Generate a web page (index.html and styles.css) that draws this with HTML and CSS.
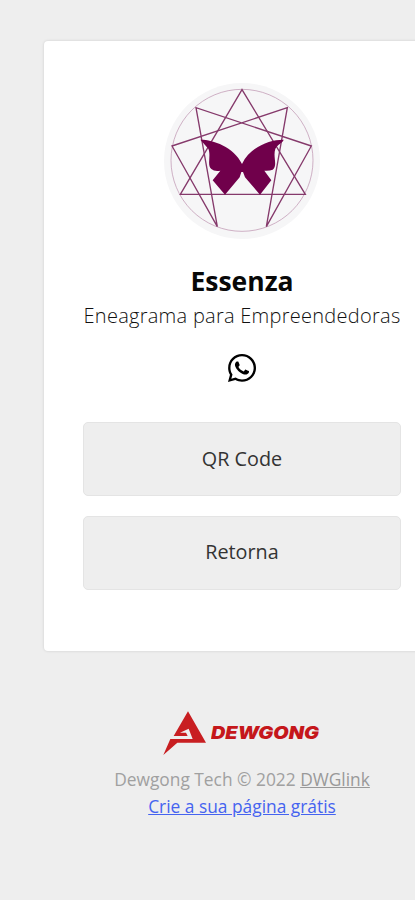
FILE: index.html
```html
<!DOCTYPE html>
<html lang="pt-BR">
<head>
<meta charset="utf-8">
<meta name="viewport" content="width=device-width, initial-scale=1">
<title>Essenza</title>
<link rel="stylesheet" href="styles.css">
</head>
<body>
<div class="page">
  <main class="card">
    <svg class="avatar" viewBox="0 0 474 474" aria-label="Essenza">
      <circle cx="237" cy="237" r="234" fill="#f6f6f7"/>
      <g fill="none" stroke="#85396b">
        <circle cx="237" cy="235" r="213" stroke-width="2" stroke="#b98daa"/>
        <g stroke-width="4">
          <path d="M237 23L52 337H427Z"/>
          <path d="M373 77L27 192L163 434L99 77L445 192L310 434Z"/>
        </g>
      </g>
      <path fill="#70004b" d="M112 173C146 172 212 193 237 246C262 193 324 172 362 173C359 184 342 187 337 201C329 226 345 249 329 263Q320 267 304 266L325 295L291 338L246 286L240 270H235L230 286L186 338L149 295L172 266Q154 269 145 261C131 249 145 222 136 200Z"/>
    </svg>
    <h1 class="name">Essenza</h1>
    <p class="bio">Eneagrama para Empreendedoras</p>
    <a class="social" href="#" aria-label="WhatsApp">
      <svg viewBox="0 0 448 512"><path d="M380.900 97.100C339 55.100 283.200 32 223.900 32c-122.400 0-222 99.600-222 222 0 39.100 10.200 77.300 29.600 111L0 480l117.700-30.900c32.400 17.700 68.900 27 106.100 27h.1c122.300 0 224.100-99.600 224.100-222 0-59.300-25.200-115-67.100-157zm-157 341.600c-33.200 0-65.700-8.900-94-25.700l-6.700-4-69.800 18.300L72 359.200l-4.400-7c-18.500-29.400-28.200-63.300-28.200-98.200 0-101.700 82.800-184.500 184.600-184.500 49.300 0 95.600 19.200 130.400 54.100 34.800 34.900 56.200 81.200 56.100 130.500 0 101.800-84.900 184.600-186.600 184.600zm101.200-138.200c-5.500-2.800-32.800-16.200-37.900-18-5.100-1.900-8.800-2.800-12.500 2.800-3.700 5.600-14.300 18-17.600 21.800-3.200 3.700-6.500 4.200-12 1.400-32.600-16.300-54-29.100-75.500-66-5.700-9.800 5.700-9.100 16.300-30.300 1.800-3.700.9-6.900-.5-9.700-1.400-2.800-12.500-30.100-17.100-41.200-4.500-10.800-9.100-9.300-12.500-9.500-3.200-.2-6.900-.2-10.600-.2-3.700 0-9.700 1.400-14.800 6.900-5.100 5.600-19.400 19-19.400 46.300 0 27.300 19.900 53.700 22.600 57.400 2.800 3.700 39.100 59.700 94.800 83.800 35.200 15.200 49 16.500 66.600 13.900 10.700-1.600 32.800-13.400 37.400-26.400 4.600-13 4.600-24.100 3.200-26.400-1.300-2.500-5-3.900-10.500-6.600z"/></svg>
    </a>
    <a class="link" href="#">QR Code</a>
    <a class="link" href="#">Retorna</a>
  </main>
  <footer class="footer">
    <div class="brand">
      <svg class="mark" viewBox="0 0 132 132"><path fill="#c81e21" d="M75 1L129 95H43L1 132L22 84H89L77 53L51 65H69L74 75H32Z"/></svg>
      <svg class="wordmark" viewBox="0 0 110 44"><text x="0" y="28" textLength="108" lengthAdjust="spacingAndGlyphs">DEWGONG</text></svg>
    </div>
    <p class="copy">Dewgong Tech © 2022 <a href="#">DWGlink</a></p>
    <p class="create"><a href="#">Crie a sua página grátis</a></p>
  </footer>
</div>
</body>
</html>
```
FILE: styles.css
```css
* { box-sizing: border-box; }
html { overflow: hidden; background: #eee; }
body { margin: 0; min-height: 900px; overflow: hidden; background: #eee; color: #111; font-family: "Open Sans", sans-serif; }
h1, p { margin: 0; }
.page { width: 398px; padding: 41px 0 0; margin-left: 44px; }
.card { height: 610px; padding: 41px 41px 0 39px; display: flex; flex-direction: column; align-items: center; background: #fff; border-radius: 4px; box-shadow: 0 0 3px rgba(0,0,0,.14); }
.avatar { width: 158px; height: 158px; flex: none; }
.name { margin-top: 21px; font-size: 26.500px; line-height: 40px; font-weight: 700; color: #080808; }
.bio { font-size: 20px; line-height: 30px; font-weight: 300; letter-spacing: .27px; color: #111; white-space: nowrap; }
.social { width: 28px; height: 32px; margin: 21px 0 38px; }
.social svg { display: block; width: 28px; height: 32px; fill: #000; }
.link { width: 318px; height: 74px; padding-bottom: 2px; margin-bottom: 19.500px; flex: none; display: flex; align-items: center; justify-content: center; background: #eee; border: 1px solid #e4e4e4; border-radius: 5px; color: #333; font-size: 19.800px; font-weight: 400; text-decoration: none; }
.footer { width: 396px; padding-top: 60px; display: flex; flex-direction: column; align-items: center; }
.brand { width: 158px; height: 44px; display: flex; gap: 4px; }
.mark { width: 44px; height: 44px; flex: none; }
.wordmark { width: 110px; height: 44px; flex: none; fill: #c5171b; font: italic 900 17.500px Inter, sans-serif; }
.copy, .create { font-size: 17.350px; line-height: 27px; color: #a0a0a0; white-space: nowrap; }
.copy { margin-top: 11px; }
.copy a { color: #999; }
.create a { color: #4563f0; }
```
